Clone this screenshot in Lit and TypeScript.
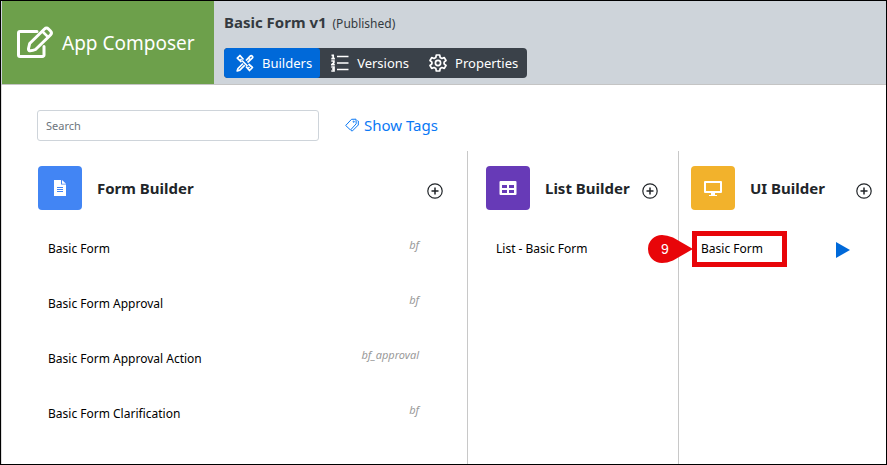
import { LitElement, html, svg, css } from "lit";
import { customElement, property } from "lit/decorators.js";

const icons = {
  edit: svg`<svg viewBox="0 0 38 34" width="38" height="34" fill="none" stroke="#fff" stroke-width="3" stroke-linejoin="round" stroke-linecap="round" aria-hidden="true">
    <path d="M21 5.500H4a1.500 1.500 0 0 0-1.500 1.500V29A1.500 1.500 0 0 0 4 30.500h22.500A1.500 1.500 0 0 0 28 29V20.500"/>
    <path d="M12.500 22.500l1.200-5L28.500 3q2-2 4 0l2 2q2 2 0 4L19.500 23.500q-3 1.500-6 1.300-1.200-.3-1-2.300z"/>
    <path d="M26.500 5.500l5.500 5.500" stroke-width="2.500"/></svg>`,
  tools: svg`<svg viewBox="0 0 18 18" width="18" height="18" fill="none" stroke="#fff" stroke-width="1.700" stroke-linejoin="round" aria-hidden="true">
    <path d="M7 9.500L2 14.500 1.200 17l2.600-.8 5-5M10 6.700l4.200-4.500q1-1 2 0t0 2L11.500 8.500M12.500 4l2 2"/>
    <path d="M7.500 5.500L4 1.500 1.300 4.200 5.500 8M10 12.500l3.500 4 3-3L12.500 10M4 6.500L5.500 5M12 14.500l1.500-1.500M6 6.500l5.500 5.500"/></svg>`,
  list: svg`<svg viewBox="0 0 18 18" width="18" height="18" fill="none" stroke="#fff" stroke-width="1.500" aria-hidden="true">
    <path d="M6 2.500h11.500M6 9h11.500M6 15.500h11.500"/>
    <path d="M.5 1.300h1.700V5M.3 4.600h3.600M.3 7h2.600v1.500L.8 10.700h3M.3 13h2.700v4H.3M1 15h2" stroke-width="1.700"/></svg>`,
  gear: svg`<svg viewBox="0 0 18 18" width="18" height="18" fill="none" stroke="#fff" stroke-width="1.700" stroke-linejoin="round" aria-hidden="true">
    <path d="M7.300 1h3.400l.5 2.500 1.700 1 2.400-.9 1.700 2.900-1.900 1.600v1.800l1.900 1.600-1.700 2.900-2.400-.9-1.700 1-.5 2.500H7.300l-.5-2.500-1.700-1-2.400.9L1 11.500l1.900-1.600V8.100L1 6.500l1.700-2.900 2.400.9 1.700-1z"/><circle cx="9" cy="9" r="2.600"/></svg>`,
  tags: svg`<svg viewBox="0 0 14 14" width="14" height="14" fill="none" stroke="#0a78f5" stroke-width="1" stroke-linejoin="round" aria-hidden="true">
    <path d="M.7 7.500L6.500 1.300l4.500-.1.200 4.600L5.500 12z"/><path d="M12.500 2.500l.8.500v4L7.300 13l-1.300-.5"/><circle cx="8.700" cy="3.700" r=".6"/></svg>`,
  plus: svg`<svg viewBox="0 0 16 16" width="16" height="16" fill="none" stroke="#212529" stroke-width="1.200" aria-hidden="true">
    <circle cx="8" cy="8" r="7.200"/><path d="M8 4.500v7M4.500 8h7" stroke-width="1.500"/></svg>`,
  form: svg`<svg viewBox="0 0 14 16" width="14" height="16" aria-hidden="true">
    <path fill="#fff" d="M1 0h7v4.500h5V16H1zM9 0l4 3.700H9z"/><path stroke="#4285f4" d="M4 7.500h6M4 9.500h6M4 11.500h6"/></svg>`,
  grid: svg`<svg viewBox="0 0 18 14" width="18" height="14" aria-hidden="true">
    <rect width="17" height="14" x=".5" rx="1" fill="#fff"/><path fill="#673ab7" d="M3 4h5v3H3zM10 4h5v3h-5zM3 9h5v3H3zM10 9h5v3h-5z"/></svg>`,
  screen: svg`<svg viewBox="0 0 20 17" width="20" height="17" aria-hidden="true">
    <path fill="none" stroke="#fff" stroke-width="2" stroke-linejoin="round" d="M2 2h16v10H2z"/><path fill="#fff" d="M8 13h4v2h2v1H6v-1h2z"/></svg>`,
  play: svg`<svg viewBox="0 0 14 16" width="14" height="16" aria-hidden="true"><path fill="#0069d9" d="M0 0l14 8L0 16z"/></svg>`,
};

const reset = css`
  * { box-sizing: border-box; }
  button { font: inherit; color: inherit; border: 0; padding: 0; margin: 0; background: none; cursor: pointer; }
  a { color: inherit; text-decoration: none; }
  svg { display: block; flex: none; }
`;

interface Entry { name: string; code?: string; runnable?: boolean; step?: string; }

@customElement("builder-column")
export class BuilderColumn extends LitElement {
  @property() heading = "";
  @property() icon: "form" | "grid" | "screen" = "form";
  @property({ attribute: false }) entries: Entry[] = [];

  static styles = [reset, css`
    :host { display: block; padding-top: 15px; min-width: 0; }
    .head { display: flex; align-items: center; height: 44px; }
    .tile { width: 44px; height: 44px; border-radius: 4px; flex: none; display: flex; align-items: center; justify-content: center; }
    .form { background: #4285f4; }
    .grid { background: #673ab7; }
    .screen { background: #f2b22c; }
    h2 { flex: 1; margin: 0 0 0 15px; font-size: 15px; line-height: 20px; font-weight: 700; color: #212529; white-space: nowrap; }
    .add { padding-top: 5px; }
    ul { list-style: none; margin: 11px 0 0; padding: 0 22px 0 10px; }
    li { display: flex; align-items: center; justify-content: space-between; height: 55px; }
    .name { position: relative; font-size: 12px; line-height: 18px; color: #000; white-space: nowrap; }
    .code { font-size: 11px; line-height: 16px; font-style: italic; color: #999; padding: 0 2px 8px 0; }
    .run { padding-top: 2px; }
    .frame { position: absolute; top: -9px; left: -9px; width: 95px; height: 36px; border: 5px solid #e80509; }
    .step { position: absolute; top: -5px; left: -53px; width: 45px; height: 28px; display: flex; align-items: center; }
    .step svg { position: absolute; }
    .step span { position: relative; width: 34px; text-align: center; color: #fff; font: 14px/20px "Liberation Sans", sans-serif; }
  `];

  render() {
    return html`
      <div class="head">
        <div class="tile ${this.icon}">${icons[this.icon]}</div>
        <h2>${this.heading}</h2>
        <button class="add" aria-label="Add to ${this.heading}">${icons.plus}</button>
      </div>
      <ul>
        ${this.entries.map((e) => html`<li>
          <a class="name" href="#">${e.name}${e.step ? html`
            <span class="frame"></span>
            <span class="step">
              <svg viewBox="0 0 45 28" width="45" height="28" aria-hidden="true"><path fill="#e80509" d="M45 14L25 25.500Q19 28 14 28A14 14 0 0 1 14 0Q19 0 25 2.500z"/></svg>
              <span>${e.step}</span>
            </span>` : ""}</a>
          ${e.code ? html`<span class="code">${e.code}</span>` : ""}
          ${e.runnable ? html`<button class="run" aria-label="Run ${e.name}">${icons.play}</button>` : ""}
        </li>`)}
      </ul>`;
  }
}

@customElement("app-root")
export class AppRoot extends LitElement {
  static styles = [reset, css`
    :host { display: flex; flex-direction: column; box-sizing: border-box; min-height: 100vh; border: 1px solid #000; background: #fff;
      font-family: "Noto Sans", "Open Sans", sans-serif; color: #212529; }
    header { display: flex; border-left: 1px solid #ced4da; border-bottom: 1px solid #c4c4c4; background: #ced4da; min-height: 84px; }
    .brand { width: 212px; flex: none; display: flex; align-items: center; gap: 8px; padding-left: 14px; background: #6da04b; color: #fff; font-size: 19px; line-height: 24px; white-space: nowrap; }
    .info { padding: 9px 10px 0; min-width: 0; }
    h1 { margin: 0; font-size: 15px; line-height: 24px; font-weight: 700; color: #343a40; white-space: nowrap; }
    h1 small { font-size: 12px; font-weight: 400; margin-left: 2px; }
    nav { display: flex; width: max-content; margin-top: 12px; height: 30px; border-radius: 4px; overflow: hidden; background: #3a4149; color: #fff; }
    nav button { display: flex; align-items: center; gap: 8px; padding: 0 9px 0 11px; font-size: 13px; line-height: 20px; white-space: nowrap; }
    nav .active { background: #0069d9; border-radius: 0 3px 3px 0; padding: 0 8px 0 12px; }
    main { flex: 1; display: flex; flex-direction: column; border-left: 1px solid #ddd; }
    .tools { display: flex; align-items: center; gap: 26px; padding: 25px 35px 0; }
    input { width: 282px; height: 31px; border: 1px solid #ced4da; border-radius: 3px; padding: 0 8px; font: 11px/16px "Noto Sans", sans-serif; color: #495057; }
    input::placeholder { color: #6c757d; opacity: 1; }
    .tags { display: flex; align-items: center; gap: 5px; padding-bottom: 2px; font-size: 15px; line-height: 22px; color: #0a78f5; }
    .columns { flex: 1; display: grid; grid-template-columns: minmax(0, 1fr) 211px 207px; margin-top: 10px; }
    builder-column { border-right: 1px solid #c8c8c8; padding-left: 36px; padding-right: 24px; }
    builder-column + builder-column { padding-left: 18px; padding-right: 20px; }
    builder-column:last-child { border-right: 0; padding-left: 12px; padding-right: 14px; }
  `];

  private forms: Entry[] = [
    { name: "Basic Form", code: "bf" },
    { name: "Basic Form Approval", code: "bf" },
    { name: "Basic Form Approval Action", code: "bf_approval" },
    { name: "Basic Form Clarification", code: "bf" },
  ];
  private lists: Entry[] = [{ name: "List - Basic Form" }];
  private pages: Entry[] = [{ name: "Basic Form", runnable: true, step: "9" }];

  render() {
    return html`
      <header>
        <div class="brand">${icons.edit}<span>App Composer</span></div>
        <div class="info">
          <h1>Basic Form v1 <small>(Published)</small></h1>
          <nav>
            <button class="active">${icons.tools}<span>Builders</span></button>
            <button>${icons.list}<span>Versions</span></button>
            <button>${icons.gear}<span>Properties</span></button>
          </nav>
        </div>
      </header>
      <main>
        <div class="tools">
          <input type="search" placeholder="Search" aria-label="Search" />
          <a class="tags" href="#">${icons.tags}<span>Show Tags</span></a>
        </div>
        <div class="columns">
          <builder-column heading="Form Builder" icon="form" .entries=${this.forms}></builder-column>
          <builder-column heading="List Builder" icon="grid" .entries=${this.lists}></builder-column>
          <builder-column heading="UI Builder" icon="screen" .entries=${this.pages}></builder-column>
        </div>
      </main>`;
  }
}
